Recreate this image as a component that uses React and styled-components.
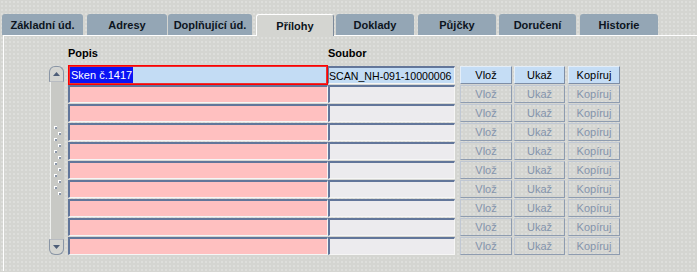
import React from "react";
import styled, { createGlobalStyle, css } from "styled-components";

const Global = createGlobalStyle`
  html, body { margin: 0; padding: 0; }
  body {
    background-color: #d4d5d1;
    font-family: "Liberation Sans", Arial, sans-serif;
    font-size: 11px;
    color: #000;
    width: 697px;
    height: 272px;
    overflow: hidden;
  }
`;

const Page = styled.div`
  width: 697px;
  height: 272px;
  background-color: #d4d5d1;
  background-image: radial-gradient(circle, rgba(255,255,255,0.45) 0.6px, transparent 0.8px);
  background-size: 4px 4px;
`;

const TabBar = styled.div`
  display: flex;
  align-items: flex-end;
  padding: 14px 0 0 2px;
  height: 21px;
`;

const Tab = styled.div`
  box-sizing: border-box;
  width: ${(p) => p.$w}px;
  margin-right: ${(p) => p.$gap}px;
  height: 21px;
  background: #94a6b5;
  border-radius: 3px 3px 0 0;
  display: flex;
  align-items: center;
  justify-content: center;
  font-weight: bold;
  font-size: 11px;
  color: #0c1420;
  padding-top: 1px;
  ${(p) =>
    p.$active &&
    css`
      background: #d4d5d1;
      border-top: 1px solid #fff;
      border-left: 1px solid #fff;
      border-right: 1px solid #7d8a9a;
      height: 22px;
      margin-bottom: -1px;
      position: relative;
      z-index: 1;
    `}
`;

const Panel = styled.div`
  margin-left: 3px;
  border-top: 1px solid #fff;
  border-left: 1px solid #fff;
  height: 236px;
  box-sizing: border-box;
  padding: 10px 0 0 45px;
`;

const HeaderRow = styled.div`
  display: flex;
  height: 20px;
  font-weight: bold;
  font-size: 11px;
  align-items: flex-start;
  padding-top: 1px;
  box-sizing: border-box;
`;

const HeaderCell = styled.div`
  width: ${(p) => p.$w}px;
  box-sizing: border-box;
`;

const Body = styled.div`
  display: flex;
  align-items: flex-start;
`;

const Scroll = styled.div`
  width: 15px;
  height: 189px;
  margin-right: 4px;
  display: flex;
  flex-direction: column;
  box-sizing: border-box;
`;

const ScrollBtn = styled.div`
  height: 16px;
  box-sizing: border-box;
  border: 1px solid #8a96a6;
  ${(p) =>
    p.$up
      ? css`border-radius: 6px 6px 0 0; border-bottom-color: #b8bcc2;`
      : css`border-radius: 0 0 6px 6px; border-top-color: #b8bcc2;`}
  background: #d4d5d1;
  display: flex;
  align-items: center;
  justify-content: center;
`;

const Track = styled.div`
  flex: 1;
  background: #c8c9c5;
  border-left: 1px solid #eef0ee;
  margin-left: 1px;
  display: flex;
  align-items: center;
  justify-content: center;
`;

const Rows = styled.div`
  display: flex;
  flex-direction: column;
  gap: 1px;
`;

const Row = styled.div`
  display: flex;
  height: 18px;
`;

const Field = styled.div`
  box-sizing: border-box;
  width: ${(p) => p.$w}px;
  height: 18px;
  background: ${(p) => p.$bg};
  border-top: 2px solid #62769a;
  border-left: 2px solid #62769a;
  border-bottom: 1px solid #f6f6f6;
  border-right: 1px solid #f6f6f6;
  display: flex;
  align-items: center;
  padding-left: 1px;
  white-space: nowrap;
  overflow: hidden;
  font-size: 11px;
  ${(p) =>
    p.$tight &&
    css`
      font-size: 10.6px;
      padding-left: 0;
      border-left-width: 1px;
    `}
  ${(p) =>
    p.$focus &&
    css`
      border: 1px solid #ff0000;
      box-shadow: inset 0 0 0 1px #e83030;
      height: 20px;
      margin-top: -1px;
      padding-left: 1px;
    `}
`;

const Selected = styled.span`
  background: #0a14f5;
  color: #fff;
  line-height: 16px;
  padding: 0 1px;
`;

const Buttons = styled.div`
  display: flex;
  margin-left: 5px;
`;

const Btn = styled.div`
  box-sizing: border-box;
  width: ${(p) => p.$w}px;
  margin-right: ${(p) => p.$mr || 0}px;
  height: 18px;
  display: flex;
  align-items: center;
  justify-content: center;
  font-size: 11px;
  border: 1px solid #c0c8d4;
  border-right-color: #8e9cb0;
  border-bottom-color: #8e9cb0;
  ${(p) =>
    p.$enabled
      ? css`
          background: #c5ddf5;
          color: #000;
          border-color: #e4eef8 #7e8ea6 #7e8ea6 #e4eef8;
        `
      : css`
          background: transparent;
          color: #8494ac;
        `}
`;

const Grip = () => (
  <svg width="10" height="70" viewBox="0 0 10 70">
    {Array.from({ length: 6 }).map((_, i) => (
      <g key={i}>
        <rect x="1" y={i * 12} width="3" height="3" fill="#fff" />
        <rect x="2" y={i * 12 + 1} width="2" height="2" fill="#8a96a8" />
        <rect x="5" y={i * 12 + 6} width="3" height="3" fill="#fff" />
        <rect x="6" y={i * 12 + 7} width="2" height="2" fill="#8a96a8" />
      </g>
    ))}
  </svg>
);

const tabs = [
  { t: "Základní úd.", w: 81, g: 4 },
  { t: "Adresy", w: 80, g: 1 },
  { t: "Doplňující úd.", w: 84, g: 4 },
  { t: "Přílohy", w: 78, g: 2, a: true },
  { t: "Doklady", w: 78, g: 4 },
  { t: "Půjčky", w: 78, g: 3 },
  { t: "Doručení", w: 77, g: 4 },
  { t: "Historie", w: 78, g: 0 },
];

export default function App() {
  const rows = Array.from({ length: 10 });
  return (
    <Page>
      <Global />
      <TabBar>
        {tabs.map((t) => (
          <Tab key={t.t} $w={t.w} $gap={t.g} $active={t.a}>
            {t.t}
          </Tab>
        ))}
      </TabBar>
      <Panel>
        <HeaderRow>
          <HeaderCell $w={19} />
          <HeaderCell $w={260}>Popis</HeaderCell>
          <HeaderCell $w={127}>Soubor</HeaderCell>
        </HeaderRow>
        <Body>
          <Scroll>
            <ScrollBtn $up>
              <svg width="7" height="4" viewBox="0 0 7 4">
                <path d="M3.5 0 L7 4 L0 4 Z" fill="#4e5e78" />
              </svg>
            </ScrollBtn>
            <Track>
              <Grip />
            </Track>
            <ScrollBtn>
              <svg width="7" height="4" viewBox="0 0 7 4">
                <path d="M0 0 L7 0 L3.5 4 Z" fill="#4e5e78" />
              </svg>
            </ScrollBtn>
          </Scroll>
          <Rows>
            {rows.map((_, i) => {
              const first = i === 0;
              return (
                <Row key={i}>
                  <Field $w={260} $bg={first ? "#c3dcf4" : "#ffc0c0"} $focus={first}>
                    {first && <Selected>Sken č.1417</Selected>}
                  </Field>
                  <Field $w={127} $bg={first ? "#c3dcf4" : "#ecebee"} $tight={first}>
                    {first && "SCAN_NH-091-10000006"}
                  </Field>
                  <Buttons>
                    <Btn $w={52} $mr={2} $enabled={first}>Vlož</Btn>
                    <Btn $w={51} $mr={3} $enabled={first}>Ukaž</Btn>
                    <Btn $w={52} $enabled={first}>Kopíruj</Btn>
                  </Buttons>
                </Row>
              );
            })}
          </Rows>
        </Body>
      </Panel>
    </Page>
  );
}
